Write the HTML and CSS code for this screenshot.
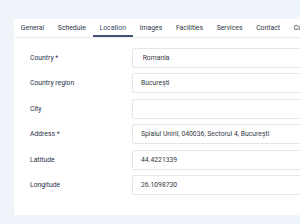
FILE: index.html
```html
<!DOCTYPE html>
<html>
<head>
<meta charset="utf-8">
<link rel="stylesheet" href="styles.css">
</head>
<body>
<div class="card">
  <div class="tabs">
    <div class="tab">General</div>
    <div class="tab">Schedule</div>
    <div class="tab active">Location</div>
    <div class="tab">Images</div>
    <div class="tab">Facilities</div>
    <div class="tab">Services</div>
    <div class="tab">Contact</div>
    <div class="tab">Custom</div>
  </div>
  <div class="form">
    <div class="row"><label class="label">Country *</label><div class="input">&nbsp;Romania</div></div>
    <div class="row"><label class="label">Country region</label><div class="input">București</div></div>
    <div class="row"><label class="label">City</label><div class="input"></div></div>
    <div class="row"><label class="label">Address *</label><div class="input">Splaiul Unirii, 040036, Sectorul 4, București</div></div>
    <div class="row"><label class="label">Latitude</label><div class="input">44.4221339</div></div>
    <div class="row"><label class="label">Longitude</label><div class="input">26.1098730</div></div>
  </div>
</div>
</body>
</html>
```
FILE: styles.css
```css
html, body {
  margin: 0;
  padding: 0;
  width: 300px;
  height: 224px;
  overflow: hidden;
  background: #eff3fa;
  font-family: Roboto, "Liberation Sans", sans-serif;
}
body {
  padding: 19px 0 0 14px;
  box-sizing: border-box;
}
.card {
  width: 360px;
  background: #ffffff;
  padding-bottom: 20px;
}
.tabs {
  display: flex;
  height: 18px;
  border-bottom: 1px solid #e8ebf0;
  white-space: nowrap;
}
.tab {
  flex-shrink: 0;
  padding: 0 6.85px;
  font-size: 6.85px;
  line-height: 18px;
  color: #2e3445;
  box-sizing: border-box;
  height: 18px;
}
.tab.active {
  color: #3c4a6b;
  border-bottom: 2px solid #46526e;
}
.form {
  padding: 10px 0 0 16px;
  display: flex;
  flex-direction: column;
  gap: 5.4px;
}
.row {
  display: flex;
  align-items: center;
}
.label {
  width: 102px;
  font-size: 6.8px;
  color: #27304a;
}
.input {
  flex: 1;
  height: 20px;
  box-sizing: border-box;
  border: 1px solid #e2e5ea;
  border-radius: 2px;
  padding: 0 8px;
  font-size: 6.8px;
  line-height: 18px;
  color: #333a45;
  white-space: nowrap;
}
```
